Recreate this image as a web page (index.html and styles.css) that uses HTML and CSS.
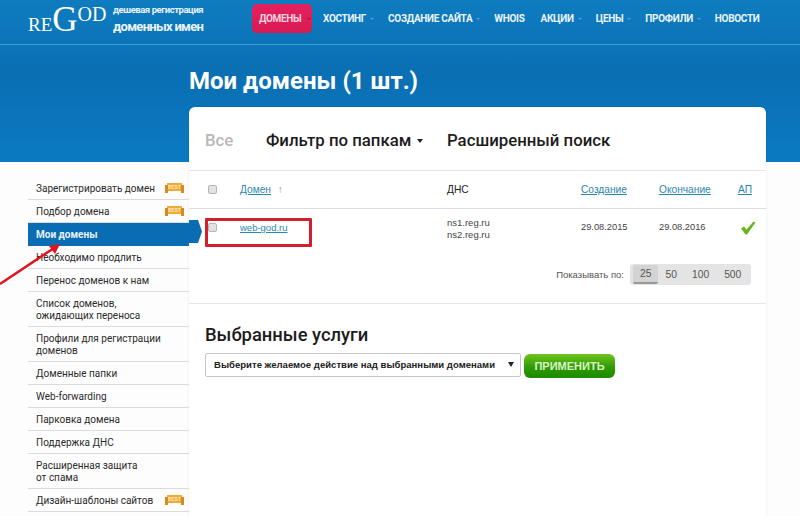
FILE: index.html
```html
<!DOCTYPE html>
<html lang="ru">
  <head>
    <meta charset="UTF-8" />
    <meta name="viewport" content="width=device-width, initial-scale=1.0" />
    <title>Мои домены</title>
    <link rel="stylesheet" href="styles.css">
  </head>
  <body>
    <div class="page">
      <header class="topbar">
        <a class="logo" href="#">
          <span class="logo-name"><span class="logo-re">RE</span><span class="logo-g">G</span><span class="logo-od">OD</span></span>
          <span class="logo-text">
            <span class="logo-small">дешевая регистрация</span>
            <span class="logo-big">доменных имен</span>
          </span>
        </a>
        <nav class="menu">
          <a class="menu-item active caret" href="#">ДОМЕНЫ</a>
          <a class="menu-item caret" href="#">ХОСТИНГ</a>
          <a class="menu-item caret" href="#">СОЗДАНИЕ САЙТА</a>
          <a class="menu-item" href="#">WHOIS</a>
          <a class="menu-item caret" href="#">АКЦИИ</a>
          <a class="menu-item caret" href="#">ЦЕНЫ</a>
          <a class="menu-item caret" href="#">ПРОФИЛИ</a>
          <a class="menu-item" href="#">НОВОСТИ</a>
        </nav>
      </header>

      <h1 class="title">Мои домены (1 шт.)</h1>

      <div class="main">
        <ul class="side">
          <li class="side-item">Зарегистрировать домен <span class="best">BEST</span></li>
          <li class="side-item">Подбор домена <span class="best">BEST</span></li>
          <li class="side-item current">Мои домены</li>
          <li class="side-item">Необходимо продлить</li>
          <li class="side-item">Перенос доменов к нам</li>
          <li class="side-item">Список доменов,<br />ожидающих переноса</li>
          <li class="side-item">Профили для регистрации<br />доменов</li>
          <li class="side-item">Доменные папки</li>
          <li class="side-item">Web-forwarding</li>
          <li class="side-item">Парковка домена</li>
          <li class="side-item">Поддержка ДНС</li>
          <li class="side-item">Расширенная защита<br />от спама</li>
          <li class="side-item">Дизайн-шаблоны сайтов <span class="best">BEST</span></li>
        </ul>

        <section class="card">
          <div class="filters">
            <span class="filter-all">Все</span>
            <span class="filter-folder">Фильтр по папкам</span>
            <span>Расширенный поиск</span>
          </div>

          <div class="row head">
            <span><input type="checkbox" class="check" /></span>
            <span><a href="#">Домен</a> <span class="sort">↑</span></span>
            <span>ДНС</span>
            <span><a href="#">Создание</a></span>
            <span><a href="#">Окончание</a></span>
            <span><a href="#">АП</a></span>
          </div>

          <div class="row domain">
            <span><input type="checkbox" class="check" /></span>
            <span class="domain-name"><a href="#">web-god.ru</a></span>
            <span>ns1.reg.ru<br />ns2.reg.ru</span>
            <span class="date">29.08.2015</span>
            <span class="date">29.08.2016</span>
            <span>
              <svg class="tick" width="16" height="14" viewBox="0 0 16 14">
                <path d="M1 7.5 L4 5.5 L6.5 8.5 L13.5 0.5 L15.5 1.5 L7 13.5 L5.5 13.5 Z" fill="#6cb51f" />
              </svg>
            </span>
          </div>

          <div class="perpage">
            <span class="perpage-label">Показывать по:</span>
            <div class="perpage-group">
              <span class="perpage-btn on">25</span>
              <span class="perpage-btn">50</span>
              <span class="perpage-btn">100</span>
              <span class="perpage-btn">500</span>
            </div>
          </div>

          <div class="services">
            <h2>Выбранные услуги</h2>
            <div class="services-form">
              <div class="select">Выберите желаемое действие над выбранными доменами</div>
              <button class="apply" type="button">ПРИМЕНИТЬ</button>
            </div>
          </div>
        </section>
      </div>

      <!-- пометки поверх скриншота -->
      <div class="mark-box"></div>
      <svg class="mark-arrow" width="70" height="50" viewBox="0 0 70 50">
        <path d="M0 43 L54 7" stroke="#e0131f" stroke-width="2.5" fill="none" />
        <path d="M60 3 L49 5 L55 13 Z" fill="#e0131f" />
      </svg>
    </div>
  </body>
</html>
```

FILE: styles.css
```css
html,
body {
  margin: 0;
  height: 100%;
}

body {
  overflow: hidden;
  font-family: "Liberation Sans", Arial, sans-serif;
  color: #222;
}

a {
  color: #2a87ad;
}

.page {
  position: relative;
  width: 800px;
  height: 516px;
  overflow: hidden;
  background: linear-gradient(#0f7cc0, #0a6fb3 45%, #0b7ac2) no-repeat top / 100% 162px, #fdfdfd;
}

/* верхняя полоса */
.topbar {
  display: flex;
  height: 44px;
  border-bottom: 1px solid #3f9ad2;
  padding-left: 28px;
}

.logo {
  display: flex;
  flex: none;
  width: 224px;
  color: #fff;
  text-decoration: none;
}

.logo-name {
  flex: none;
  width: 85px;
  height: 40px;
  font-family: "Liberation Serif", serif;
  line-height: 28px;
  white-space: nowrap;
}

.logo-re {
  font-size: 19px;
}

.logo-g {
  font-size: 35px;
}

.logo-od {
  font-size: 20px;
  vertical-align: 10px;
}

.logo-text {
  display: flex;
  flex-direction: column;
  padding-top: 4px;
  font-family: "Roboto", sans-serif;
  font-weight: 700;
  white-space: nowrap;
  color: #e8f3fa;
}

.logo-small {
  font-size: 9.5px;
  letter-spacing: -0.45px;
  line-height: 12px;
}

.logo-big {
  margin-top: 1px;
  font-size: 13px;
  letter-spacing: -0.7px;
  line-height: 20px;
}

.menu {
  display: flex;
  flex: none;
  align-items: flex-start;
  margin-top: 4px;
}

.menu-item {
  position: relative;
  height: 29px;
  padding: 0 8px;
  font-family: "Roboto", sans-serif;
  font-size: 10px;
  font-weight: 700;
  letter-spacing: -0.32px;
  line-height: 30px;
  color: #e9f4fb;
  text-decoration: none;
  white-space: nowrap;
}

.menu-item.caret {
  padding-right: 14px;
}

.menu-item.caret::after {
  content: "";
  position: absolute;
  top: 14px;
  right: 6px;
  border: 2px solid transparent;
  border-top: 2px solid #4f9fd0;
}

.menu-item.active {
  width: 43px;
  padding: 0 10px 0 7px;
  margin-right: 3px;
  border-radius: 5px;
  background: linear-gradient(#e4215f, #d81a52);
  color: #f7d3de;
}

.menu-item.active::after {
  right: 1px;
  border-top-color: #a31240;
}

.title {
  margin: 20px 0 0 189px;
  height: 42px;
  font-family: "Roboto", sans-serif;
  font-size: 24px;
  font-weight: 700;
  line-height: 32px;
  color: #fff;
}

.main {
  display: flex;
  align-items: flex-start;
  padding-left: 28px;
}

/* левое меню */
.side {
  flex: none;
  width: 161px;
  margin: 70px 0 0;
  padding: 0;
  list-style: none;
}

.side-item {
  position: relative;
  padding: 6px 8px 4px;
  border-bottom: 1px solid #dcdcdc;
  font-family: "Roboto", sans-serif;
  font-size: 10px;
  line-height: 12px;
  color: #2b2b2b;
}

.side-item.current {
  border-bottom: none;
  padding: 6px 8px 5px;
  background: #0a6db3;
  font-weight: 700;
  color: #e6f1f8;
}

.side-item.current::after {
  content: "";
  position: absolute;
  top: -3px;
  left: 161px;
  width: 13px;
  height: 23px;
  background: #0a6db3;
  clip-path: polygon(0 0, 9px 0, 100% 50%, 9px 100%, 0 100%);
}

.best {
  position: absolute;
  top: 6px;
  right: 7px;
  width: 15px;
  height: 8px;
  background: #f2a93b;
  font-size: 5.5px;
  font-weight: 700;
  line-height: 8px;
  text-align: center;
  color: #ffe6b5;
}

.best::before,
.best::after {
  content: "";
  position: absolute;
  top: 2px;
  width: 3px;
  height: 8px;
  background: #d98a1f;
}

.best::before {
  left: -2px;
}

.best::after {
  right: -2px;
}

/* карточка с таблицей */
.card {
  box-sizing: border-box;
  width: 577px;
  height: 420px;
  border-radius: 6px 6px 0 0;
  background: #fff;
  box-shadow: 0 0 3px rgba(0, 0, 0, 0.08);
}

.filters {
  display: flex;
  height: 64px;
  border-bottom: 1px solid #e4e4e4;
  padding: 23px 0 0 16px;
  box-sizing: border-box;
  font-family: "Roboto", sans-serif;
  font-size: 16.8px;
  font-weight: 500;
  line-height: 20px;
  color: #1c1c1c;
}

.filter-all {
  width: 61px;
  color: #b8b8b8;
}

.filter-folder {
  position: relative;
  width: 181px;
}

.filter-folder::after {
  content: "";
  position: absolute;
  top: 9px;
  left: 151px;
  border: 3.5px solid transparent;
  border-top: 4px solid #222;
}

.row {
  display: grid;
  grid-template-columns: 32px 207px 134px 78px 79px 28px;
  padding-left: 19px;
  font-size: 9.5px;
}

.head {
  height: 37px;
  border-bottom: 1px solid #dedede;
  align-items: center;
  font-size: 10.2px;
}

.sort {
  margin-left: 4px;
  color: #999;
}

.check {
  appearance: none;
  display: block;
  width: 9px;
  height: 9px;
  margin: 0;
  border: 1px solid #b5b5b5;
  border-radius: 2px;
  background: #e2e2e2;
}

.domain {
  height: 52px;
  padding-top: 8px;
  box-sizing: border-box;
  line-height: 11.5px;
  color: #444;
}

.domain .check {
  margin-top: 6px;
}

.domain-name {
  padding-top: 5px;
}

.date {
  padding-top: 5px;
  font-size: 9.3px;
}

.tick {
  display: block;
  margin: 4px 0 0 2px;
}

.perpage {
  display: flex;
  justify-content: flex-end;
  align-items: flex-start;
  height: 43px;
  border-bottom: 1px solid #e6e6e6;
  padding: 3px 15px 0 0;
  box-sizing: border-box;
  font-size: 9.5px;
  color: #555;
}

.perpage-label {
  margin-right: 6px;
  line-height: 21px;
}

.perpage-group {
  display: flex;
  align-items: center;
  width: 121px;
  height: 21px;
  padding-left: 3px;
  box-sizing: border-box;
  border-radius: 3px;
  background: #e4e4e4;
  font-size: 10.3px;
}

.perpage-btn {
  margin-left: 15px;
}

.perpage-btn.on {
  margin-left: 0;
  padding: 0 7px;
  border-bottom: 2px solid #9a9a9a;
  border-radius: 2px;
  background: #d3d3d3;
  line-height: 17px;
}

.perpage-btn.on + .perpage-btn {
  margin-left: 7px;
}

.services {
  padding: 20px 16px 0;
}

.services h2 {
  margin: 0 0 7px;
  font-family: "Roboto", sans-serif;
  font-size: 18.4px;
  font-weight: 500;
  line-height: 22px;
  color: #1c1c1c;
}

.services-form {
  display: flex;
  align-items: flex-start;
  gap: 3px;
}

.select {
  position: relative;
  box-sizing: border-box;
  width: 316px;
  height: 24px;
  border: 1px solid #c6c6c6;
  border-radius: 2px;
  padding-left: 8px;
  font-size: 9.55px;
  font-weight: 700;
  line-height: 22px;
  white-space: nowrap;
  color: #222;
}

.select::after {
  content: "";
  position: absolute;
  top: 8px;
  right: 6px;
  border: 3px solid transparent;
  border-top: 5px solid #222;
}

.apply {
  width: 91px;
  height: 24px;
  margin-top: 1px;
  border: none;
  border-radius: 6px;
  background: linear-gradient(#6fc51d, #2f9a05 55%, #1c8a00);
  font-family: "Liberation Sans", sans-serif;
  font-size: 11px;
  font-weight: 700;
  color: #d9f3c4;
}

/* красная рамка и стрелка */
.mark-box {
  position: absolute;
  top: 218px;
  left: 205px;
  width: 101px;
  height: 23px;
  border: 3px solid #d3202e;
  border-radius: 1px;
}

.mark-arrow {
  position: absolute;
  top: 241px;
  left: 0;
}
```
